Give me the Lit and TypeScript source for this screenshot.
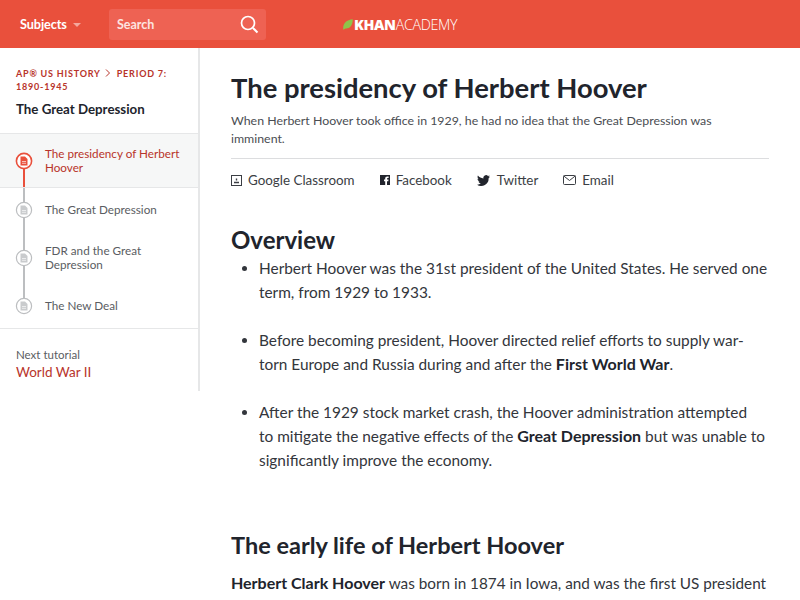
import { LitElement, html, css, svg } from "lit";
import { customElement } from "lit/decorators.js";

const doc = (c: string) => svg`<path d="M-3.5 -4.500h4.500l2.500 2.500v6.500h-7z" fill="${c}"/><path d="M-2 0.500h4M-2 2.300h4" stroke="#fff" stroke-width=".8" opacity=".8"/>`;

@customElement("app-root")
export class AppRoot extends LitElement {
  static styles = css`
    :host { display: block; height: 600px; overflow: hidden; font-family: Lato, sans-serif; color: #21242c; background: #fff; }
    .top { height: 48px; background: #e9503c; display: flex; align-items: center; color: #fff; box-sizing: border-box; padding-left: 20px; }
    .subjects { font-size: 12.700px; font-weight: 700; letter-spacing: -.1px; width: 89px; display: flex; align-items: center; gap: 6px; }
    .caret { width: 0; height: 0; border-left: 4px solid transparent; border-right: 4px solid transparent; border-top: 4px solid #f4a89d; margin-top: 2px; }
    .search { width: 157px; height: 31px; background: #ee6253; border-radius: 3px; display: flex; align-items: center; justify-content: space-between; padding: 0 7px 0 8px; box-sizing: border-box; font-size: 12.500px; font-weight: 700; color: #fde4e0; }
    .search span { padding-top: 1px; }
    .logo { margin-left: 77px; display: flex; align-items: center; gap: 1px; font-size: 14.300px; letter-spacing: -.35px; font-family: "Open Sans", sans-serif; }
    .logo strong { font-weight: 800; }
    .logo span { font-weight: 300; }
    .body { display: flex; align-items: flex-start; }
    .side { width: 200px; height: 343px; flex: none; border-right: 2px solid #e6e7e8; box-sizing: border-box; }
    .crumbs { padding: 19px 15px 0 16px; height: 86px; box-sizing: border-box; border-bottom: 1px solid #e6e7e8; }
    .crumb { font-size: 9px; line-height: 13px; font-weight: 700; letter-spacing: .8px; color: #b8342a; text-transform: uppercase; }
    .crumb svg { margin: 0 3px 0 4px; }
    .unit { font-size: 13.300px; font-weight: 700; line-height: 18px; margin-top: 7px; color: #21242c; }
    .item { position: relative; display: flex; align-items: center; padding-left: 45px; padding-right: 10px; font-size: 11.700px; line-height: 14px; color: #5a5d62; box-sizing: border-box; }
    .item span { margin-top: -2px; }
    .item svg { position: absolute; left: 15px; top: 50%; margin-top: -9px; }
    .item::before { content: ""; position: absolute; left: 23px; top: 0; bottom: 0; width: 2px; background: #bcbec0; }
    .i1 { height: 54px; background: #f6f7f7; color: #b8342a; border-bottom: 1px solid #e6e7e8; }
    .i1::before { background: #e9503c; top: 27px; }
    .i2 { height: 44px; }
    .i3 { height: 52px; }
    .i4 { height: 44px; }
    .i4::before { bottom: 50%; }
    .next { border-top: 1px solid #e6e7e8; padding: 19px 16px; font-size: 11.500px; line-height: 14px; color: #5a5d62; }
    .next a { display: block; color: #b8342a; font-size: 13.500px; line-height: 18px; margin-top: 1px; }
    main { flex: 1; padding: 0 31px; min-width: 0; }
    h1 { margin: 22px 0 0; font-size: 27.400px; line-height: 36px; font-weight: 700; }
    .sub { margin: 6px 0 0; font-size: 12.350px; line-height: 18px; color: #4a4d52; padding-bottom: 10px; border-bottom: 1px solid #dcdddf; }
    .share { display: flex; height: 42px; align-items: center; font-size: 13.400px; color: #3b3e44; }
    .share div { display: flex; align-items: center; gap: 6px; margin-right: 25px; }
    .share .tw { gap: 7px; }
    h2 { margin: 0; font-size: 24px; line-height: 30px; font-weight: 700; }
    .ov { margin-top: 24px; }
    ul { margin: 1px 0 0; padding: 0 0 0 28px; list-style: disc; font-size: 15.400px; line-height: 24px; color: #33363c; }
    li { margin-bottom: 24px; }
    b { font-size: 16px; font-weight: 700; color: #21242c; }
    .early { margin-top: 58px; font-size: 23.500px; }
    .para { margin: 11px 0 0; font-size: 15.300px; line-height: 24px; color: #33363c; }
  `;

  node(active: boolean) {
    const c = active ? "#e9503c" : "#bcbec0";
    return html`<svg width="18" height="18" viewBox="-9 -9 18 18"><circle r="7.600" fill="#fff" stroke="${c}" stroke-width="${active ? 1.6 : 1.2}"/>${doc(active ? "#e9503c" : "#c9cbcd")}</svg>`;
  }

  render() {
    return html`
      <div class="top">
        <div class="subjects">Subjects <span class="caret"></span></div>
        <div class="search"><span>Search</span>
          <svg width="20" height="20" viewBox="0 0 20 20" fill="none" stroke="#fff" stroke-width="1.700"><circle cx="9" cy="9" r="6.500"/><path d="M14 14l4.500 4.500" stroke-width="2"/></svg>
        </div>
        <div class="logo">
          <svg width="10" height="11" viewBox="0 0 10 11"><path d="M.3 10.700C-.5 5 3 .8 9.700.3 10 6.500 6.500 10 2.500 9.500L.3 10.700z" fill="#8fc34a"/></svg>
          <div><strong>KHAN</strong><span>ACADEMY</span></div>
        </div>
      </div>
      <div class="body">
        <aside class="side">
          <div class="crumbs">
            <div class="crumb">AP® US History<svg width="6" height="8" viewBox="0 0 6 8" fill="none" stroke="#b8342a" stroke-width="1"><path d="M1 .5l3.500 3.500L1 7.500"/></svg> Period 7: 1890-1945</div>
            <div class="unit">The Great Depression</div>
          </div>
          <div class="item i1">${this.node(true)}<span>The presidency of Herbert Hoover</span></div>
          <div class="item i2">${this.node(false)}<span>The Great Depression</span></div>
          <div class="item i3">${this.node(false)}<span>FDR and the Great Depression</span></div>
          <div class="item i4">${this.node(false)}<span>The New Deal</span></div>
          <div class="next">Next tutorial<a>World War II</a></div>
        </aside>
        <main>
          <h1>The presidency of Herbert Hoover</h1>
          <p class="sub">When Herbert Hoover took office in 1929, he had no idea that the Great Depression was<br />imminent.</p>
          <div class="share">
            <div><svg width="11" height="11" viewBox="0 0 11 11" fill="none" stroke="#3b3e44"><rect x=".5" y=".5" width="10" height="10"/><path d="M3 7.500h5M5.500 3.500v2" stroke-width="1.400"/></svg>Google Classroom</div>
            <div><svg width="10" height="10" viewBox="0 0 10 10"><path d="M0 0h10v10H7V6.200h1.300L8.500 4.600H7V3.700c0-.5.2-.8.8-.8h.8V1.500H7.300C5.900 1.500 5.200 2.300 5.200 3.600v1H4v1.600h1.200V10H0z" fill="#21242c"/></svg>Facebook</div>
            <div class="tw"><svg width="13" height="11" viewBox="0 0 24 20"><path d="M24 2.400c-.9.4-1.800.7-2.800.8 1-.6 1.800-1.600 2.200-2.700-1 .6-2 1-3.100 1.200A4.900 4.900 0 0 0 11.900 6.200C7.800 6 4.200 4 1.700.9.400 3.100 1 6 3.200 7.500c-.8 0-1.600-.2-2.200-.6 0 2.300 1.600 4.400 3.900 4.900-.7.200-1.500.2-2.200.1.600 2 2.400 3.400 4.600 3.400A9.900 9.900 0 0 1 0 17.800 14 14 0 0 0 21.500 5.400c1-.7 1.900-1.700 2.500-3z" fill="#21242c"/></svg>Twitter</div>
            <div><svg width="13" height="10" viewBox="0 0 13 10" fill="none" stroke="#3b3e44"><rect x=".5" y=".5" width="12" height="9" rx="1"/><path d="M.8 1l5.700 4.500L12.200 1"/></svg>Email</div>
          </div>
          <h2 class="ov">Overview</h2>
          <ul>
            <li>Herbert Hoover was the 31st president of the United States. He served one term, from 1929 to 1933.</li>
            <li>Before becoming president, Hoover directed relief efforts to supply war-<br />torn Europe and Russia during and after the <b>First World War</b>.</li>
            <li>After the 1929 stock market crash, the Hoover administration attempted<br />to mitigate the negative effects of the <b>Great Depression</b> but was unable to significantly improve the economy.</li>
          </ul>
          <h2 class="early">The early life of Herbert Hoover</h2>
          <p class="para"><b>Herbert Clark Hoover</b> was born in 1874 in Iowa, and was the first US president</p>
        </main>
      </div>
    `;
  }
}
